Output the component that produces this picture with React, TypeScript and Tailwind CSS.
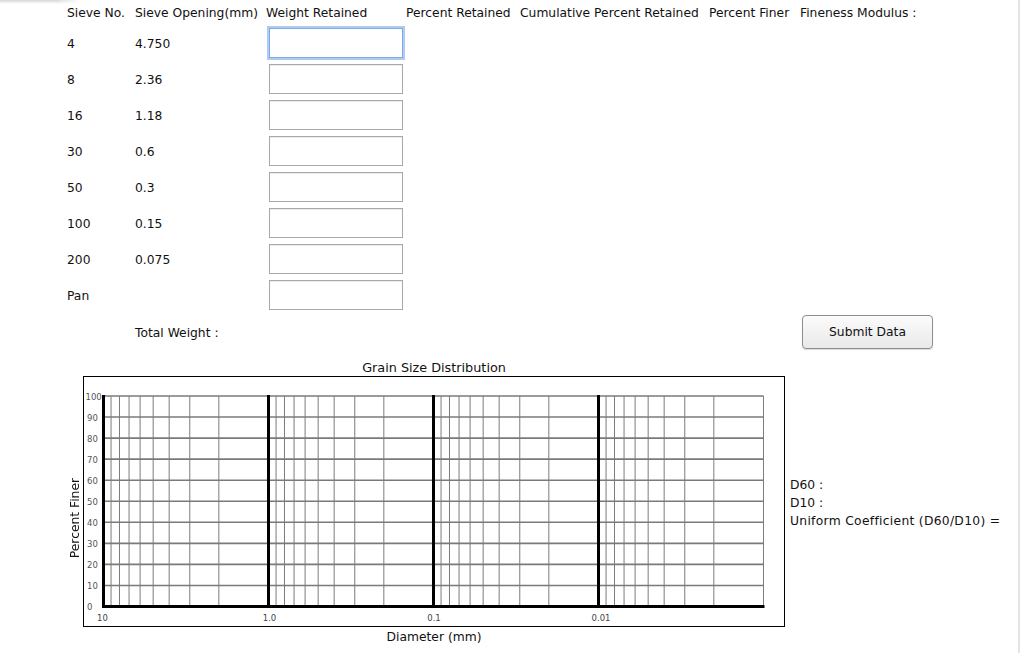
import React from "react";

const rows = [
  ["4", "4.750"],
  ["8", "2.36"],
  ["16", "1.18"],
  ["30", "0.6"],
  ["50", "0.3"],
  ["100", "0.15"],
  ["200", "0.075"],
  ["Pan", ""],
];

function Chart() {
  const ox = 19.5;
  const dw = 165;
  const top = 19;
  const step = 21.05;
  const bottom = top + step * 10;
  const right = ox + dw * 4;
  const minors: number[] = [];
  for (let d = 0; d < 4; d++) {
    for (let k = 9; k >= 2; k--) {
      minors.push(ox + d * dw + dw * Math.log10(10 / k));
    }
  }
  const hLines = Array.from({ length: 10 }, (_, i) => top + i * step);
  const yLabels = Array.from({ length: 11 }, (_, i) => ({ v: 100 - i * 10, y: top + i * step }));
  const xLabels = [
    { t: "10", x: 18.5 },
    { t: "1.0", x: 185.5 },
    { t: "0.1", x: 350 },
    { t: "0.01", x: 517 },
  ];
  return (
    <svg width="700" height="249" viewBox="0 0 700 249" className="block">
      {minors.map((x, i) => (
        <line key={"m" + i} x1={x} x2={x} y1={top} y2={bottom} stroke="#7d7d7d" strokeWidth="1" />
      ))}
      <line x1={right} x2={right} y1={top} y2={bottom} stroke="#7d7d7d" strokeWidth="1" />
      {hLines.map((y, i) => (
        <line key={"h" + i} x1={ox} x2={right} y1={y} y2={y} stroke="#7a7a7a" strokeWidth="1.6" />
      ))}
      {[0, 1, 2, 3].map((d) => (
        <line key={"t" + d} x1={ox + d * dw} x2={ox + d * dw} y1={top - 1} y2={bottom} stroke="#000" strokeWidth="3" />
      ))}
      <line x1={ox - 1.5} x2={right + 1} y1={bottom} y2={bottom} stroke="#000" strokeWidth="3" />
      {yLabels.map((l) => (
        <text
          key={"y" + l.v}
          x={l.v === 100 ? 1.5 : 3}
          y={l.y + 0.5}
          fontSize="8.5"
          fill="#555"
          dominantBaseline="central"
          fontFamily="'DejaVu Sans', sans-serif"
        >
          {l.v}
        </text>
      ))}
      {xLabels.map((l) => (
        <text
          key={"x" + l.t}
          x={l.x}
          y={241}
          fontSize="8.5"
          fill="#444"
          textAnchor="middle"
          dominantBaseline="central"
          fontFamily="'DejaVu Sans', sans-serif"
        >
          {l.t}
        </text>
      ))}
    </svg>
  );
}

export default function App() {
  return (
    <div
      className="relative flex h-[653px] w-[1020px] overflow-hidden bg-white text-[12.3px] leading-[14px] text-[#111]"
      style={{ fontFamily: "'DejaVu Sans', sans-serif" }}
    >
      <div className="pointer-events-none absolute left-0 top-0 h-[4px] w-[80px] bg-gradient-to-b from-[#d6d6d6] to-transparent [mask-image:linear-gradient(to_right,black_70%,transparent)]" />
      <div className="flex w-[1018px] flex-col">
        {/* header */}
        <div className="flex h-[28px] items-start pl-[67px] pt-[6px] whitespace-nowrap">
          <div className="w-[68px]">Sieve No.</div>
          <div className="w-[131px]">Sieve Opening(mm)</div>
          <div className="w-[140px]">Weight Retained</div>
          <div className="w-[114px]">Percent Retained</div>
          <div className="w-[189px]">Cumulative Percent Retained</div>
          <div className="w-[91px]">Percent Finer</div>
          <div>Fineness Modulus :</div>
        </div>
        {/* rows */}
        <div className="flex flex-col gap-[6px]">
          {rows.map(([n, o], i) => (
            <div key={n} className="flex h-[30px] items-center pl-[67px]">
              <div className="w-[68px] pt-[2px]">{n}</div>
              <div className="w-[134px] pt-[2px]">{o}</div>
              <input
                type="text"
                className={
                  i === 0
                    ? "h-[30px] w-[134px] border border-[#7eabe6] bg-white shadow-[0_0_0_2px_#aecbf2] outline-none"
                    : "h-[30px] w-[134px] border border-[#a8a8a8] bg-white shadow-[inset_0_1px_1px_rgba(0,0,0,0.08)] outline-none"
                }
              />
            </div>
          ))}
        </div>
        {/* total + submit */}
        <div className="mt-[5px] flex h-[34px] items-center pl-[135px]">
          <div className="w-[667px] pt-[2px]">Total Weight :</div>
          <button className="h-[34px] w-[131px] rounded-[4px] border border-[#8e8e8e] bg-gradient-to-b from-[#fbfbfb] to-[#e9e9e9] text-[12.3px] text-[#111] shadow-[0_1px_1px_rgba(0,0,0,0.15)]">
            Submit Data
          </button>
        </div>
        {/* chart title */}
        <div className="mt-[12px] flex h-[13px] pl-[83px]">
          <div className="w-[702px] text-center text-[12.8px]">Grain Size Distribution</div>
        </div>
        {/* chart row */}
        <div className="mt-[2px] flex items-center">
          <div className="flex h-[251px] w-[83px] justify-end pr-[1px]">
            <div className="mb-[69px] self-end whitespace-nowrap [writing-mode:vertical-rl] rotate-180">
              Percent Finer
            </div>
          </div>
          <div className="h-[251px] w-[702px] border border-black bg-white">
            <Chart />
          </div>
          <div className="ml-[5px] whitespace-nowrap pt-[2px] leading-[18px]">
            <div>D60 :</div>
            <div>D10 :</div>
            <div className="tracking-[0.3px]">Uniform Coefficient (D60/D10) =</div>
          </div>
        </div>
        {/* x axis title */}
        <div className="mt-[3px] flex h-[14px] pl-[83px]">
          <div className="w-[702px] text-center">Diameter (mm)</div>
        </div>
      </div>
      <div className="w-[2px] bg-[#e4e4e4]" />
    </div>
  );
}
